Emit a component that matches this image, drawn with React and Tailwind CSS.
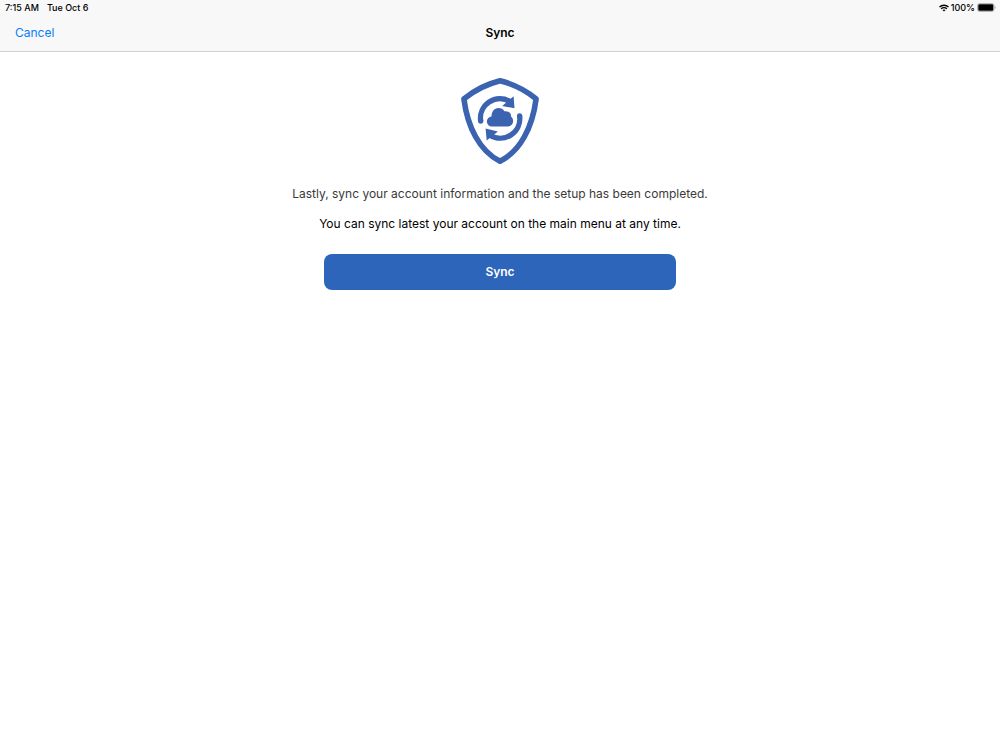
import React from "react";

function WifiIcon() {
  return (
    <svg viewBox="0 0 20 15" className="h-2 w-2.5" fill="none" stroke="#000" strokeWidth="2.7" aria-hidden="true">
      <path d="M1 5.6C6 .8 14 .8 19 5.6" />
      <path d="M4.3 9.2c3.2-3.1 8.2-3.1 11.4 0" />
      <path d="M10 14.6 6.9 11.6c1.8-1.5 4.4-1.5 6.2 0z" fill="#000" stroke="none" />
    </svg>
  );
}

function BatteryIcon() {
  return (
    <svg viewBox="0 0 19 9" className="h-[9px] w-[19px]" aria-hidden="true">
      <rect x="0.5" y="0.5" width="16.6" height="8" rx="2.2" fill="#f8f8f8" stroke="#a3a3a3" strokeWidth="0.8" />
      <rect x="1.3" y="1.3" width="15" height="6.4" rx="1.3" fill="#000" />
      <path d="M17.8 3.1c1 .4 1 2.4 0 2.8z" fill="#999" />
    </svg>
  );
}

function ShieldSyncIcon() {
  return (
    <svg viewBox="0 0 100 100" className="size-[100px]" aria-hidden="true">
      <path
        d="M50 10.7C63 14 76 20.5 86.1 28.8C82.5 57 70.5 81 50 91.3C29.5 81 17.5 57 13.9 28.8C24 20.5 37 14 50 10.7Z"
        fill="none"
        stroke="#3c63b0"
        strokeWidth="5.6"
        strokeLinejoin="round"
      />
      <g fill="none" stroke="#3c63b0" strokeWidth="5.3">
        <path d="M30.7 51.2A19.5 19.5 0 0 1 60 31.5" />
        <path d="M69.6 45.8A19.5 19.5 0 0 1 40 65.2" />
      </g>
      <g fill="#3c63b0">
        <circle cx="30.7" cy="51" r="2.65" />
        <circle cx="69.6" cy="46" r="2.65" />
        <path d="M63.6 26.2 64.5 38.2 52.2 36Z" />
        <path d="M35.6 58.4 36.7 70.6 47.9 61.4Z" />
        <path d="M42 56.4a4.9 4.9 0 0 1-.5-9.8C41.5 42 44 38.1 48.4 38.1c2.6 0 4.8 1.2 6 3.2 3.9-.8 7 1.9 6.7 5.4 1.3.9 2 2.4 2 4.5a5.1 5.1 0 0 1-5 5.2Z" />
      </g>
    </svg>
  );
}

export default function App() {
  return (
    <div className="min-h-screen bg-white font-['Inter','Liberation_Sans',sans-serif] text-black">
      <header className="border-b border-[#d2d2d2] bg-[#f8f8f8]">
        <div className="flex h-[15px] items-center justify-between pr-1 pl-[5px] text-[9px] leading-4 font-medium">
          <div className="flex gap-2">
            <span>7:15 AM</span>
            <span>Tue Oct 6</span>
          </div>
          <div className="flex items-center gap-0.5">
            <WifiIcon />
            <span>100%</span>
            <BatteryIcon />
          </div>
        </div>
        <nav className="grid h-9 grid-cols-3 items-center px-[15px] text-[12px] leading-5">
          <button type="button" className="justify-self-start text-[#087cff]">
            Cancel
          </button>
          <h1 className="text-center font-semibold">Sync</h1>
        </nav>
      </header>
      <main className="flex flex-col items-center px-4 pt-[18px]">
        <ShieldSyncIcon />
        <p className="mt-3.5 text-center text-[12px] leading-5 text-[#3a3a3a]">
          Lastly, sync your account information and the setup has been completed.
        </p>
        <p className="mt-2.5 text-center text-[12px] leading-5">
          You can sync latest your account on the main menu at any time.
        </p>
        <button
          type="button"
          className="mt-5 h-9 w-full max-w-[352px] rounded-lg bg-[#2c65ba] text-[12px] font-semibold text-white"
        >
          Sync
        </button>
      </main>
    </div>
  );
}
